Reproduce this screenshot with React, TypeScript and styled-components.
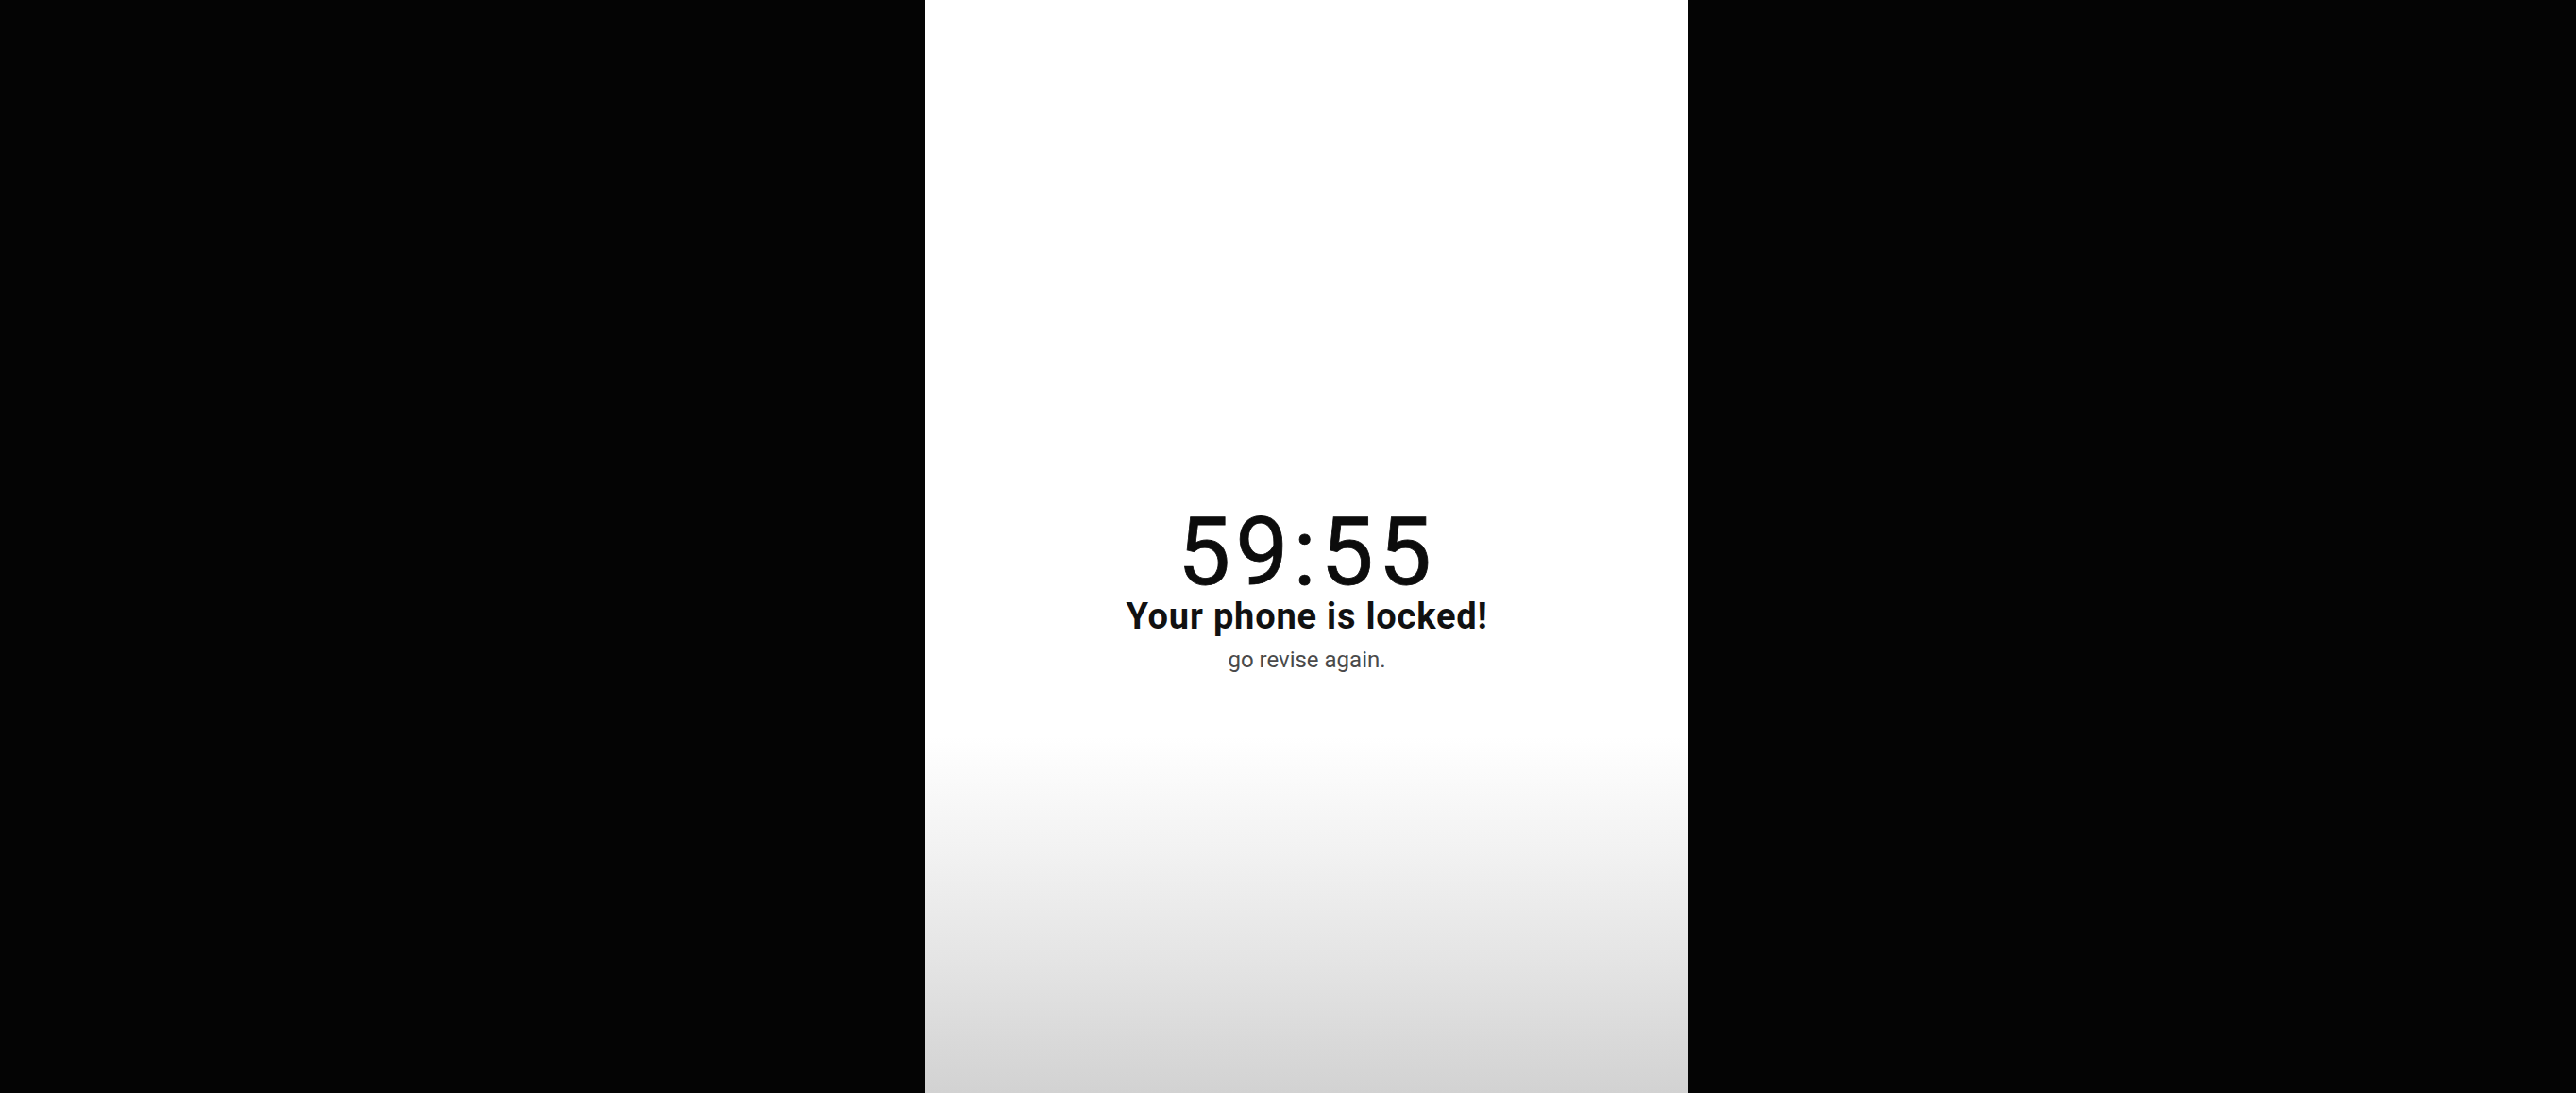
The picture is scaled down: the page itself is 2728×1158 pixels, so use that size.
import React from "react";
import styled, { createGlobalStyle } from "styled-components";

const Global = createGlobalStyle`
  html, body {
    margin: 0;
    padding: 0;
    background: #040404;
  }
  #root {
    height: 1158px;
  }
`;

const Stage = styled.div`
  display: flex;
  justify-content: center;
  width: 2728px;
  height: 1158px;
  padding-left: 40px;
  box-sizing: border-box;
  background: #040404;
`;

const Phone = styled.div`
  width: 808px;
  height: 1158px;
  display: flex;
  flex-direction: column;
  align-items: center;
  padding-top: 540px;
  box-sizing: border-box;
  background: linear-gradient(
    to bottom,
    #ffffff 0px,
    #ffffff 780px,
    #f2f2f2 900px,
    #e4e4e4 1020px,
    #d2d2d2 1158px
  );
  font-family: Roboto, "Liberation Sans", sans-serif;
`;

const Timer = styled.div`
  font-size: 100px;
  line-height: 90px;
  font-weight: 400;
  letter-spacing: 5px;
  color: #0c0c0c;
  -webkit-text-stroke: 0.8px #0c0c0c;
`;

const Title = styled.div`
  margin-top: 4px;
  font-size: 38px;
  line-height: 1;
  font-weight: 700;
  letter-spacing: 0.8px;
  color: #111111;
`;

const Subtitle = styled.div`
  margin-top: 15px;
  font-size: 24px;
  line-height: 1;
  font-weight: 400;
  color: #4a4a4a;
`;

export default function App() {
  return (
    <>
      <Global />
      <Stage>
        <Phone>
          <Timer>59:55</Timer>
          <Title>Your phone is locked!</Title>
          <Subtitle>go revise again.</Subtitle>
        </Phone>
      </Stage>
    </>
  );
}
